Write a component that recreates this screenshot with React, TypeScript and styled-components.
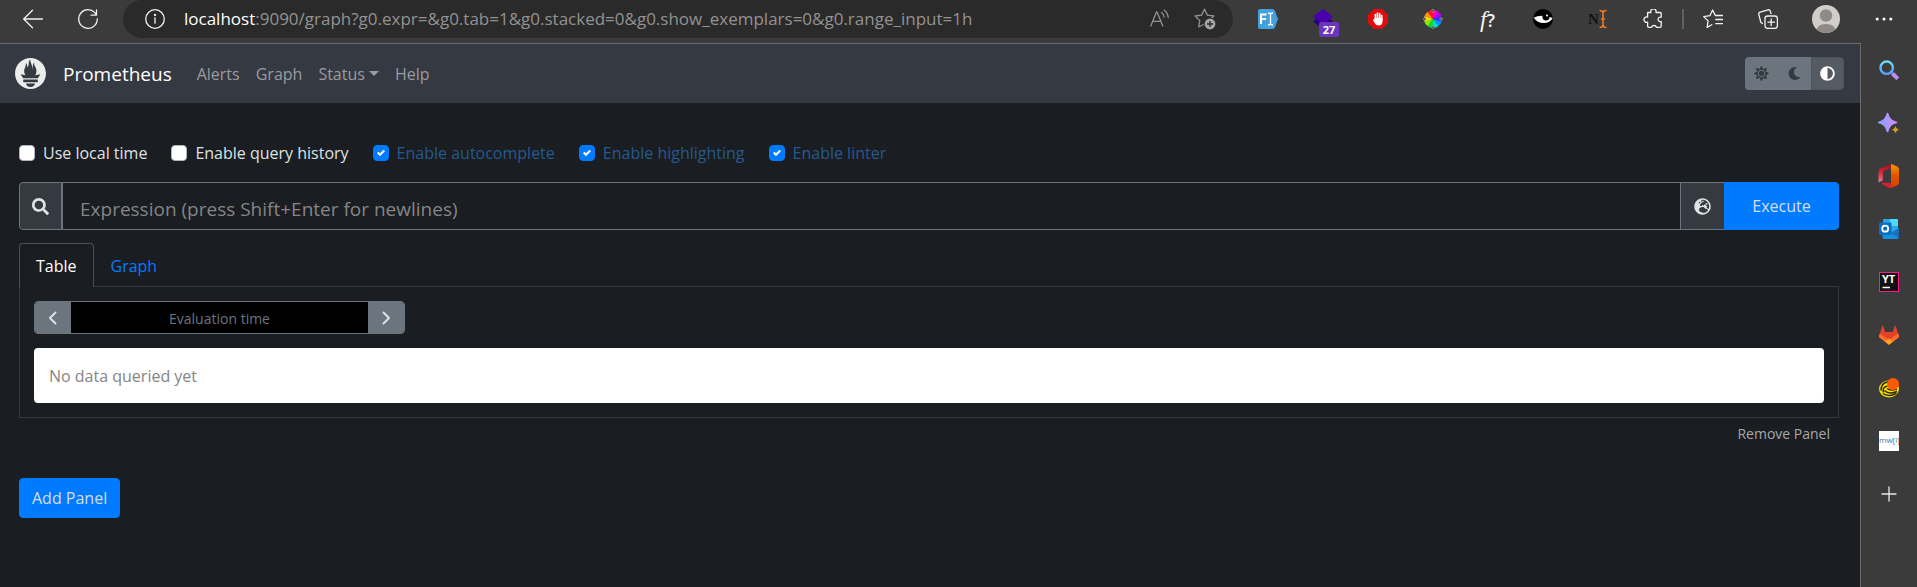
import React from "react";
import styled, { createGlobalStyle, css } from "styled-components";
import { FaSearch, FaSun, FaMoon, FaAdjust, FaGlobeEurope } from "react-icons/fa";
import { SiPrometheus } from "react-icons/si";

const GlobalStyle = createGlobalStyle`
  *, *::before, *::after { box-sizing: border-box; }
  html, body, #root { min-height: 100%; }
  body {
    margin: 0;
    background: #1a1d21;
    color: #dee2e6;
    font-family: "Open Sans", "Noto Sans", sans-serif;
    font-size: 16px;
    line-height: 24px;
  }
  button, input, textarea { font: inherit; margin: 0; }
  button { cursor: pointer; }
  svg { display: block; flex: none; }
`;

/* ---------- browser frame ---------- */

const Window = styled.div`
  display: flex;
  flex-direction: column;
  min-height: 100vh;
  background: #3b3b3b;
`;

const BrowserBar = styled.header`
  display: flex;
  align-items: flex-start;
  height: 43px;
  padding: 0 6px 0 5px;
`;

const IconSlot = styled.button<{ $width?: number }>`
  display: flex;
  align-items: center;
  justify-content: center;
  flex: none;
  position: relative;
  width: ${(p) => p.$width ?? 55}px;
  height: 38px;
  padding: 0;
  border: 0;
  background: none;
  color: #f2f2f2;
`;

const AddressBar = styled.div`
  display: flex;
  align-items: center;
  flex: 1;
  min-width: 0;
  height: 38px;
  margin: 0 7px 0 8px;
  padding: 0 6px 0 4px;
  border-radius: 19px;
  background: #2a2a2a;
`;

const Url = styled.div`
  flex: 1;
  min-width: 0;
  padding-left: 2px;
  overflow: hidden;
  white-space: nowrap;
  color: #929292;
  font-size: 17px;

  span { color: #fff; }
`;

const Divider = styled.div`
  flex: none;
  width: 2px;
  height: 20px;
  margin: 9px 1px 9px 2px;
  background: #606060;
`;

const Counter = styled.span`
  position: absolute;
  left: 24px;
  top: 22px;
  width: 20px;
  height: 15px;
  border-radius: 2px;
  background: #6b35bd;
  color: #fff;
  font-size: 11px;
  font-weight: 700;
  line-height: 15px;
`;

const Body = styled.div`
  display: flex;
  flex: 1;
`;

const SideBar = styled.aside`
  display: flex;
  flex-direction: column;
  align-items: center;
  flex: none;
  width: 56px;
`;

const SideButton = styled.button`
  display: flex;
  align-items: center;
  justify-content: center;
  width: 56px;
  height: 53px;
  padding: 0;
  border: 0;
  background: none;
  color: #e8e8e8;
`;

/* ---------- page ---------- */

const Page = styled.div`
  flex: 1;
  min-width: 0;
  border-top: 1px solid #6b6b6b;
  border-right: 1px solid #6b6b6b;
  background: #1a1d21;
`;

const NavBar = styled.nav`
  display: flex;
  align-items: center;
  height: 59px;
  padding: 0 16px 0 15px;
  background: #353941;
`;

const Brand = styled.a`
  display: flex;
  align-items: center;
  gap: 17px;
  margin-right: 17px;
  color: #fff;
  font-size: 19px;
  text-decoration: none;
`;

const NavLink = styled.a`
  display: flex;
  align-items: center;
  padding: 8px;
  color: #999ca0;
  text-decoration: none;
`;

const Caret = styled.span`
  margin-left: 4px;
  border-top: 5px solid currentColor;
  border-left: 5px solid transparent;
  border-right: 5px solid transparent;
`;

const ThemeGroup = styled.div`
  display: flex;
  margin-left: auto;
  overflow: hidden;
  border-radius: 4px;
`;

const ThemeButton = styled.button<{ $active?: boolean }>`
  display: flex;
  align-items: center;
  justify-content: center;
  width: 33px;
  height: 33px;
  padding: 0;
  border: ${(p) => (p.$active ? "1px solid #4e555b" : "0")};
  border-radius: ${(p) => (p.$active ? "0 4px 4px 0" : "0")};
  background: ${(p) => (p.$active ? "#545b62" : "#6c757d")};
  color: ${(p) => (p.$active ? "#fff" : "#343a40")};
`;

const Content = styled.main`
  padding: 38px 21px 24px 19px;
`;

const Options = styled.div`
  display: flex;
  gap: 24px;
  margin-bottom: 17px;
`;

const Option = styled.label<{ $on?: boolean }>`
  display: flex;
  align-items: center;
  gap: 8px;
  color: ${(p) => (p.$on ? "#265a8e" : "#dee2e6")};
`;

const CheckBox = styled.input`
  appearance: none;
  width: 16px;
  height: 16px;
  border: 1px solid #adb5bd;
  border-radius: 4px;
  background: #fff;

  &:checked {
    border-color: #007bff;
    background: #007bff
      url("data:image/svg+xml,%3csvg xmlns='http://www.w3.org/2000/svg' viewBox='0 0 8 8'%3e%3cpath fill='%23fff' d='M6.564.75l-3.59 3.612-1.538-1.55L0 4.26l2.974 2.99L8 2.193z'/%3e%3c/svg%3e")
      center / 8px no-repeat;
  }
`;

const InputGroup = styled.form`
  display: flex;
  height: 48px;
`;

const addon = css`
  display: flex;
  align-items: center;
  justify-content: center;
  width: 43px;
  border: 1px solid #6c757d;
  background: #343a40;
  color: #dee2e6;
`;

const SearchLabel = styled.label`
  ${addon}
  border-radius: 4px 0 0 4px;
`;

const ExplorerButton = styled.button`
  ${addon}
  border-left: 0;
  border-right: 0;
`;

const Expression = styled.textarea`
  flex: 1;
  min-width: 0;
  padding: 13px 17px 7px;
  border: 1px solid #6c757d;
  border-radius: 0;
  outline: 0;
  background: #1a1d21;
  color: #dee2e6;
  font-size: 19px;
  line-height: 26px;
  resize: none;
  overflow: hidden;

  &::placeholder { color: #858585; opacity: 1; }
`;

const PrimaryButton = styled.button<{ $attached?: boolean }>`
  width: ${(p) => (p.$attached ? "115px" : "auto")};
  height: ${(p) => (p.$attached ? "48px" : "40px")};
  padding: 0 12px;
  border: 1px solid #007bff;
  border-radius: ${(p) => (p.$attached ? "0 4px 4px 0" : "4px")};
  background: #007bff;
  color: #d5dfe9;
`;

const Tabs = styled.div`
  display: flex;
  margin-top: 13px;
`;

const Tab = styled.button<{ $active?: boolean }>`
  height: 44px;
  margin-bottom: -1px;
  padding: 0 16px;
  border: 1px solid ${(p) => (p.$active ? "#4b5056" : "transparent")};
  border-bottom: 0;
  border-radius: 4px 4px 0 0;
  background: ${(p) => (p.$active ? "#1a1d21" : "none")};
  color: ${(p) => (p.$active ? "#fff" : "#007bff")};
  z-index: 1;
`;

const Panel = styled.section`
  padding: 14px;
  border: 1px solid #35393e;
`;

const TimeGroup = styled.div`
  display: flex;
  width: 371px;
  height: 33px;
  margin-bottom: 14px;
  overflow: hidden;
  border: 1px solid #6c757d;
  border-radius: 4px;
`;

const StepButton = styled.button`
  display: flex;
  align-items: center;
  justify-content: center;
  width: 36px;
  padding: 0;
  border: 0;
  background: #6c757d;
  color: #dee2e6;
`;

const TimeInput = styled.input`
  flex: 1;
  min-width: 0;
  padding: 2px 8px 0;
  border: 0;
  outline: 0;
  background: #000;
  color: #dee2e6;
  font-size: 14px;
  text-align: center;

  &::placeholder { color: #6c757d; opacity: 1; }
`;

const Notice = styled.div`
  padding: 16px 15px 15px;
  border-radius: 4px;
  background: #fff;
  color: #858585;
`;

const PanelFooter = styled.div`
  display: flex;
  justify-content: flex-end;
  margin-bottom: 28px;
`;

const TextButton = styled.button`
  height: 32px;
  padding: 0 9px;
  border: 0;
  background: none;
  color: #a6a8aa;
  font-size: 14px;
`;

/* ---------- drawings ---------- */

type DrawProps = { size?: number; children: React.ReactNode; box?: string };

const Line = ({ size = 20, box = "0 0 20 20", children }: DrawProps) => (
  <svg width={size} height={size} viewBox={box} fill="none" stroke="currentColor" strokeWidth="1.3" strokeLinecap="round" strokeLinejoin="round" aria-hidden="true">
    {children}
  </svg>
);

const Fill = ({ size = 20, box = "0 0 20 20", children }: DrawProps) => (
  <svg width={size} height={size} viewBox={box} aria-hidden="true">
    {children}
  </svg>
);

const BackIcon = () => <Line><path d="M19.5 10H.8M9.5 1.3.7 10l8.8 8.7" /></Line>;

const ReloadIcon = () => (
  <Line><path d="M18.3 5.8A9.3 9.3 0 1 0 19.3 10M18.5.8v5.4h-5.4" /></Line>
);

const InfoIcon = () => (
  <Line><circle cx="10" cy="10" r="9.3" /><path d="M10 8.8v5.4" /><circle cx="10" cy="6" r=".5" fill="currentColor" /></Line>
);

const ReadAloudIcon = () => (
  <Line><g stroke="#929292"><path d="M.8 17 6.5 3h.6l5.7 14M2.8 12.3h8" /><path d="M11.500 3.500c1.600 1 2.400 2.400 2.600 4.500M14.200 1.300c2.500 1.800 3.800 4 4 7.200" /></g></Line>
);

const AddFavouriteIcon = () => (
  <Fill size={22} box="0 0 22 22">
    <path d="m10.500 1.200 2.900 5.900 6.500.9-4.700 4.600 1.100 6.400-5.800-3-5.800 3 1.100-6.400L1.100 8l6.500-.9z" fill="none" stroke="#929292" strokeWidth="1.300" strokeLinejoin="round" />
    <circle cx="16" cy="16" r="6.300" fill="#2a2a2a" />
    <circle cx="16" cy="16" r="5.400" fill="#a5a5a5" />
    <path d="M16 13v6M13 16h6" stroke="#2a2a2a" strokeWidth="1.300" />
  </Fill>
);

const FontTagIcon = () => (
  <Fill>
    <path d="M2 0h12.500q1.500 0 2.300 1.500L20 10l-3.200 8.500Q16 20 14.500 20H2q-2 0-2-2V2q0-2 2-2z" fill="#42a1de" />
    <path d="M3 15V5.500h5.500M3 10h5" fill="none" stroke="#fff" strokeWidth="2" />
    <path d="M10 4q2.500 0 2.500 1.500v9Q12.500 16 10 16M15 4q-2.500 0-2.500 1.500v9q0 1.500 2.500 1.500" fill="none" stroke="#fff" strokeWidth="1.300" />
  </Fill>
);

const LayersIcon = () => (
  <Fill>
    <path d="M3 10 0 12.500 10 20l10-7.500L17 10z" fill="#26007a" />
    <path d="M10 0 20 7.500 10 15 0 7.500z" fill="#4b00ad" />
  </Fill>
);

const StopHandIcon = () => (
  <Fill>
    <path d="M6 0h8l6 6v8l-6 6H6l-6-6V6z" fill="#e30b0b" />
    <path d="M7.400 11V5.500M9.500 10V4M11.700 10V4.500M13.700 11V6.500" stroke="#fff" strokeWidth="1.700" strokeLinecap="round" />
    <path d="M6.500 9h8v3.500q0 4-4 4-2.500 0-3.700-2.300L4.900 11q.8-1.500 2 0z" fill="#fff" />
  </Fill>
);

const wheel = ["#ff00b8", "#b400ff", "#3a28ff", "#0096ff", "#00e0c0", "#00d838", "#78f000", "#ffe600", "#ff9000", "#ff1030"];

const ColorWheelIcon = () => (
  <Fill>
    {wheel.map((color, i) => {
      const a = ((i * 36 - 90) * Math.PI) / 180;
      const b = (((i + 1) * 36 - 89) * Math.PI) / 180;
      return <path key={color} fill={color} d={`M10 10 ${10 + 9 * Math.cos(a)} ${10 + 9 * Math.sin(a)}A9 9 0 0 1 ${10 + 9 * Math.cos(b)} ${10 + 9 * Math.sin(b)}z`} />;
    })}
    <g fill="#3b3b3b" stroke="#aaa" strokeWidth=".7">
      <circle cx="10" cy="1.800" r="1.300" /><circle cx="10" cy="18.200" r="1.300" />
      <circle cx="1.800" cy="10" r="1.300" /><circle cx="18.200" cy="10" r="1.300" />
    </g>
  </Fill>
);

const FunctionMark = styled.span`
  font: italic 400 24px/24px "Liberation Serif", serif;

  b { font: 600 18px/24px "Open Sans", sans-serif; }
`;

const EyeIcon = () => (
  <Fill>
    <circle cx="10" cy="10" r="10" fill="#000" />
    <path d="M.6 8.800Q8 4.600 19.700 9q-2.500 5-9 5-6.500 0-10.100-5.200z" fill="#fff" />
    <circle cx="13" cy="7.800" r="3.600" fill="#000" />
    <circle cx="14" cy="6.600" r="1" fill="#fff" />
  </Fill>
);

const NotionCursorIcon = () => (
  <Fill>
    <text x="0" y="15" fontFamily="Liberation Serif, serif" fontSize="15" fontWeight="700" fill="#111">N</text>
    <path d="M11.500 1.500q3.500 0 3.500 2.500v12q0 2.500-3.500 2.500M18.500 1.500Q15 1.500 15 4v12q0 2.500 3.500 2.500M13 10h4" fill="none" stroke="#e97922" strokeWidth="1.600" />
  </Fill>
);

const PuzzleIcon = () => (
  <Line>
    <path d="M4.600 3.500h3.300a2.700 2.700 0 1 1 5 0h4.300q1 0 1 1v3.700a2.300 2.300 0 1 0 0 4.300v4.800q0 1-1 1h-3.800a2.500 2.500 0 0 0-4.800 0H5.600q-1 0-1-1v-4.200a2.700 2.700 0 1 1 0-5z" />
  </Line>
);

const FavouritesIcon = () => (
  <Line>
    <path d="M12.300 6.500 9.600 1 6.900 6.700l-6.200.9 4.400 4.300-1 6.500 4.700-2.600M12.800 6.500h6.700M12.800 10.500h6.700M12.800 14.700h6.700" />
  </Line>
);

const CollectionsIcon = () => (
  <Line>
    <rect x="7" y="7" width="12.400" height="12.400" rx="2.600" />
    <path d="M13.200 10v6.500M10 13.200h6.500M4.500 14.500l-1.600-1L.8 5.300q-.4-1.700 1.300-2.200L10 .8q1.700-.4 2.300 1.300l.7 2.500" />
  </Line>
);

const AvatarIcon = () => (
  <Fill size={28} box="0 0 28 28">
    <clipPath id="avatar-disc"><circle cx="14" cy="14" r="14" /></clipPath>
    <g clipPath="url(#avatar-disc)">
      <path d="M0 0h28v28H0z" fill="#d0ceca" />
      <circle cx="14" cy="10.500" r="6.200" fill="#8f8a86" />
      <path d="M4 28q0-9 10-9t10 9z" fill="#8f8a86" />
    </g>
  </Fill>
);

const DotsIcon = () => (
  <Fill><g fill="#fff"><circle cx="3.200" cy="10" r="1.500" /><circle cx="10" cy="10" r="1.500" /><circle cx="16.800" cy="10" r="1.500" /></g></Fill>
);

const SideSearchIcon = () => (
  <Fill>
    <defs><linearGradient id="lens" x1="0" y1="0" x2="0" y2="1"><stop stopColor="#69dcf5" /><stop offset="1" stopColor="#5b9bf6" /></linearGradient></defs>
    <path d="m11.500 11.500 2 2" stroke="#5b8fe8" strokeWidth="2" />
    <path d="m13.500 13.500 5.300 5.300" stroke="#c08cf0" strokeWidth="4" />
    <circle cx="7.700" cy="7.700" r="6.200" fill="none" stroke="url(#lens)" strokeWidth="2.400" />
  </Fill>
);

const SparkleIcon = () => (
  <Fill size={22} box="0 0 22 22">
    <defs><linearGradient id="spark"><stop stopColor="#7da5ff" /><stop offset="1" stopColor="#d68bf5" /></linearGradient></defs>
    <path d="M9.500 1.500q1.500 7.500 9 9-7.500 1.500-9 9-1.500-7.500-9-9 7.500-1.500 9-9z" fill="url(#spark)" stroke="url(#spark)" strokeWidth="1.600" strokeLinejoin="round" />
    <path d="M17.500 13.500q.7 3.500 4.200 4.200-3.500.7-4.200 4.200-.7-3.500-4.200-4.200 3.500-.7 4.200-4.200z" fill="#d0a01e" stroke="#3b3b3b" strokeWidth=".4" />
  </Fill>
);

const OfficeIcon = () => (
  <Fill size={24} box="0 0 24 24">
    <defs>
      <linearGradient id="office-left" x1="0" y1="0" x2="0" y2="1"><stop stopColor="#9c0a16" /><stop offset=".5" stopColor="#d9313c" /><stop offset="1" stopColor="#f3799a" /></linearGradient>
      <linearGradient id="office-right" x1="0" y1="0" x2="0" y2="1"><stop stopColor="#f69a00" /><stop offset=".5" stopColor="#e25400" /><stop offset="1" stopColor="#d83b01" /></linearGradient>
    </defs>
    <path d="M14 0 4 4Q1.500 5 1.500 7.500v11l4.300-2.300V8.500q0-1.500 1.500-2L14 4z" fill="url(#office-left)" />
    <path d="m5 18.500 9 .8V24h-2l-7-4z" fill="#d81f36" />
    <path d="M14 0q1 0 6 2.500 2 1 2 3v13q0 2-2 3L14 24z" fill="url(#office-right)" />
  </Fill>
);

const OutlookIcon = () => (
  <Fill>
    <path d="M5 0h13q1 0 1 1v13H4V1q0-1 1-1z" fill="#28a8ea" />
    <path d="M11 0h7q1 0 1 1v6h-8z" fill="#50d9ff" />
    <path d="M4 9l8 5 8-5v9q0 2-2 2H5q-1.500 0-1.500-1.500z" fill="#1490df" />
    <path d="m20 9-8 5 8 5z" fill="#1a6fb8" />
    <rect y="3.500" width="12.500" height="12.500" rx="1.200" fill="#0a6cc4" />
    <circle cx="6.200" cy="9.700" r="3" fill="none" stroke="#fff" strokeWidth="1.800" />
  </Fill>
);

const YouTrackIcon = () => (
  <Fill>
    <rect x=".5" y=".5" width="19" height="19" fill="#111" stroke="#ff1a8c" />
    <text x="3" y="11" fontFamily="Open Sans, sans-serif" fontSize="11" fontWeight="700" fill="#fff">YT</text>
    <path d="M3.500 15.500H11" stroke="#fff" strokeWidth="1.500" />
  </Fill>
);

const GitLabIcon = () => (
  <Fill>
    <path d="M3.500.3Q3.800 0 4 .5L6.200 7h7.600L16 .5q.2-.5.500 0L19.600 10 10 19.500.4 10z" fill="#e24329" />
    <path d="M.8 8.500 10 15l9.200-6.500L20 11q.2 1-.6 1.700L10 19.700.6 12.700Q-.2 12 0 11z" fill="#fc6d26" />
    <path d="m6 16.500 4-3 4 3-4 3.200z" fill="#fca326" />
  </Fill>
);

const CoilIcon = () => (
  <Fill>
    <ellipse cx="10" cy="11" rx="10" ry="8.500" fill="#ffe000" />
    <path d="M2 12.500Q2 5 9 3.800M4.500 14.500q-1.500-5.500 4-6.500M5.500 12.500q4.500 4.500 12.500 1M8 10.500q3 2.500 10 .5M4 15.500q6 4 13.500-.2" fill="none" stroke="#2c2a10" strokeWidth="1.500" />
    <circle cx="14" cy="6" r="6" fill="#ff5a00" />
  </Fill>
);

const MwiIcon = () => (
  <Fill>
    <path d="M0 0h20v20H0z" fill="#fff" />
    <text x="0" y="12" fontFamily="Open Sans, sans-serif" fontSize="8" fill="#2f78b7">mw[<tspan fill="#2f9a78">i</tspan><tspan fill="#e8483c">]</tspan></text>
  </Fill>
);

const PlusIcon = () => <Line size={16} box="0 0 16 16"><path d="M8 1v14M1 8h14" /></Line>;

const ChevronIcon = ({ flip }: { flip?: boolean }) => (
  <Line size={14} box="0 0 14 14">
    <path d={flip ? "m4.500 1.500 5.500 5.500-5.500 5.500" : "m9.500 1.500-5.500 5.500 5.500 5.500"} strokeWidth="1.900" />
  </Line>
);

const extensions = [
  { name: "Font identifier", icon: <FontTagIcon /> },
  { name: "Layers", icon: <><LayersIcon /><Counter>27</Counter></> },
  { name: "Ad blocker", icon: <StopHandIcon /> },
  { name: "Colour picker", icon: <ColorWheelIcon /> },
  { name: "Font finder", icon: <FunctionMark>f<b>?</b></FunctionMark> },
  { name: "Dark mode", icon: <EyeIcon /> },
  { name: "Text editor", icon: <NotionCursorIcon /> },
  { name: "Extensions", icon: <PuzzleIcon /> },
];

const sideItems = [
  { name: "Search", icon: <SideSearchIcon /> },
  { name: "Discover", icon: <SparkleIcon /> },
  { name: "Office", icon: <OfficeIcon /> },
  { name: "Outlook", icon: <OutlookIcon /> },
  { name: "YouTrack", icon: <YouTrackIcon /> },
  { name: "GitLab", icon: <GitLabIcon /> },
  { name: "Coil", icon: <CoilIcon /> },
  { name: "mwi", icon: <MwiIcon /> },
  { name: "Add", icon: <PlusIcon /> },
];

const options = [
  { label: "Use local time", on: false },
  { label: "Enable query history", on: false },
  { label: "Enable autocomplete", on: true },
  { label: "Enable highlighting", on: true },
  { label: "Enable linter", on: true },
];

export default function App() {
  return (
    <Window>
      <GlobalStyle />
      <BrowserBar>
        <IconSlot aria-label="Back"><BackIcon /></IconSlot>
        <IconSlot aria-label="Reload"><ReloadIcon /></IconSlot>
        <AddressBar>
          <IconSlot aria-label="Site information"><InfoIcon /></IconSlot>
          <Url role="textbox" aria-label="Address" tabIndex={0}>
            <span>localhost</span>:9090/graph?g0.expr=&amp;g0.tab=1&amp;g0.stacked=0&amp;g0.show_exemplars=0&amp;g0.range_input=1h
          </Url>
          <IconSlot $width={45} aria-label="Read aloud"><ReadAloudIcon /></IconSlot>
          <IconSlot $width={45} aria-label="Add to favourites"><AddFavouriteIcon /></IconSlot>
        </AddressBar>
        {extensions.map((e) => <IconSlot key={e.name} aria-label={e.name}>{e.icon}</IconSlot>)}
        <Divider />
        <IconSlot aria-label="Favourites"><FavouritesIcon /></IconSlot>
        <IconSlot aria-label="Collections"><CollectionsIcon /></IconSlot>
        <IconSlot $width={61} aria-label="Profile"><AvatarIcon /></IconSlot>
        <IconSlot aria-label="More"><DotsIcon /></IconSlot>
      </BrowserBar>
      <Body>
        <Page>
          <NavBar>
            <Brand href="#"><SiPrometheus size={31} color="#ececec" />Prometheus</Brand>
            <NavLink href="#alerts">Alerts</NavLink>
            <NavLink href="#graph">Graph</NavLink>
            <NavLink href="#status">Status<Caret /></NavLink>
            <NavLink href="#help">Help</NavLink>
            <ThemeGroup>
              <ThemeButton aria-label="Light theme"><FaSun size={15} /></ThemeButton>
              <ThemeButton aria-label="Dark theme"><FaMoon size={13} /></ThemeButton>
              <ThemeButton $active aria-label="Browser theme"><FaAdjust size={15} /></ThemeButton>
            </ThemeGroup>
          </NavBar>
          <Content>
            <Options>
              {options.map((o) => (
                <Option key={o.label} $on={o.on}>
                  <CheckBox type="checkbox" defaultChecked={o.on} />
                  {o.label}
                </Option>
              ))}
            </Options>
            <InputGroup onSubmit={(e) => e.preventDefault()}>
              <SearchLabel htmlFor="expression" aria-label="Expression"><FaSearch size={17} /></SearchLabel>
              <Expression id="expression" rows={1} placeholder="Expression (press Shift+Enter for newlines)" />
              <ExplorerButton type="button" aria-label="Open metrics explorer"><FaGlobeEurope size={17} /></ExplorerButton>
              <PrimaryButton $attached type="submit">Execute</PrimaryButton>
            </InputGroup>
            <Tabs role="tablist">
              <Tab role="tab" aria-selected="true" $active>Table</Tab>
              <Tab role="tab" aria-selected="false">Graph</Tab>
            </Tabs>
            <Panel>
              <TimeGroup>
                <StepButton aria-label="Earlier"><ChevronIcon /></StepButton>
                <TimeInput type="text" aria-label="Evaluation time" placeholder="Evaluation time" />
                <StepButton aria-label="Later"><ChevronIcon flip /></StepButton>
              </TimeGroup>
              <Notice>No data queried yet</Notice>
            </Panel>
            <PanelFooter><TextButton>Remove Panel</TextButton></PanelFooter>
            <PrimaryButton type="button">Add Panel</PrimaryButton>
          </Content>
        </Page>
        <SideBar>
          {sideItems.map((s) => <SideButton key={s.name} aria-label={s.name}>{s.icon}</SideButton>)}
        </SideBar>
      </Body>
    </Window>
  );
}
